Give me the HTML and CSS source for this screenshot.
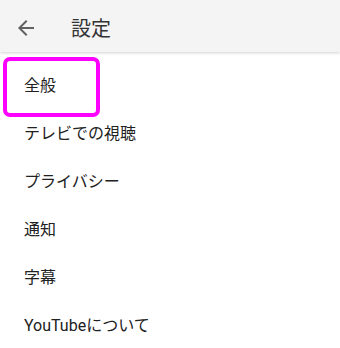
FILE: index.html
```html
<!DOCTYPE html>
<html lang="ja">
<head>
    <meta charset="UTF-8">
    <meta name="viewport" content="width=device-width, initial-scale=1.0">
    <title>設定</title>
    <link rel="stylesheet" href="styles.css">
</head>
<body>
    <div class="app-bar">
        <button class="back-button" aria-label="戻る">
            <svg width="24" height="24" viewBox="0 0 24 24">
                <path d="M20 11H7.83l5.59-5.59L12 4l-8 8 8 8 1.41-1.41L7.83 13H20v-2z" fill="#616161"/>
            </svg>
        </button>
        <h1>設定</h1>
    </div>
    <ul class="settings-list">
        <li class="highlight">全般</li>
        <li>テレビでの視聴</li>
        <li>プライバシー</li>
        <li>通知</li>
        <li>字幕</li>
        <li>YouTubeについて</li>
    </ul>
</body>
</html>
```

FILE: styles.css
```css
body {
    margin: 0;
    font-family: Roboto, "Noto Sans CJK JP", sans-serif;
    background-color: #fff;
    color: #212121;
}
.app-bar {
    height: 52px;
    display: flex;
    align-items: center;
    background-color: #f4f4f4;
    box-shadow: 0 1px 3px rgba(0, 0, 0, 0.18);
    padding-top: 3px;
    box-sizing: border-box;
}
.back-button {
    border: none;
    background: transparent;
    padding: 0;
    margin-left: 14px;
    width: 24px;
    height: 24px;
    display: flex;
}
.app-bar h1 {
    margin: 0 0 0 33px;
    font-size: 20px;
    font-weight: 400;
    color: #333;
}
.settings-list {
    list-style: none;
    margin: 0;
    padding: 10px 0 0;
}
.settings-list li {
    position: relative;
    height: 48px;
    line-height: 48px;
    padding-left: 24px;
    font-size: 16px;
}
/* pink marker drawn over the first row */
.settings-list li.highlight::after {
    content: "";
    position: absolute;
    left: 3px;
    top: -5px;
    width: 97px;
    height: 60px;
    box-sizing: border-box;
    border: 4px solid #ff00ff;
    border-radius: 7px;
}
```
